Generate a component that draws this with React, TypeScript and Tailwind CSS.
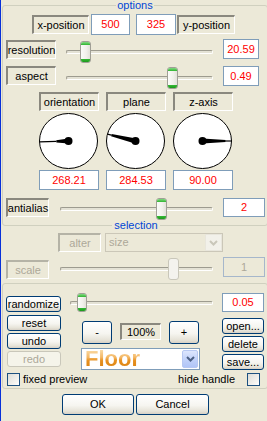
import React from "react";

const SUNKEN =
  "flex items-center justify-center border-t-2 border-l-2 border-t-[#8a887e] border-l-[#8a887e] border-b border-r border-b-white border-r-white";
const SUNKEN_DIS =
  "flex items-center justify-center border-t-2 border-l-2 border-t-[#b5b3a6] border-l-[#b5b3a6] border-b border-r border-b-white border-r-white text-[#aca899]";
const VALUE =
  "flex items-center justify-center bg-white border border-[#7f9db9] text-[#ff0000]";
const BTN =
  "flex items-center justify-center rounded-[3px] border border-[#003c74] bg-[linear-gradient(180deg,#ffffff_0%,#f6f5f0_55%,#e6e3d8_85%,#d6d0c5_100%)] text-black";
const BTN_DIS =
  "flex items-center justify-center rounded-[3px] border border-[#c9c7ba] bg-[#f5f4ea] text-[#aca899]";

function Slider({
  width,
  thumbX,
  thumbTop,
  thumbW = 11,
  thumbH = 22,
  disabled = false,
  className = "",
}: {
  width: number;
  thumbX: number;
  thumbTop: number;
  thumbW?: number;
  thumbH?: number;
  disabled?: boolean;
  className?: string;
}) {
  const trackTop = thumbTop + Math.round(thumbH / 2) - 2;
  return (
    <div className={"relative " + className} style={{ width, height: thumbTop + thumbH + 1 }}>
      <div
        className="h-[4px] rounded-[2px] border border-t-[#9d9b8f] border-l-[#9d9b8f] border-b-white border-r-white bg-[#e4e2d5]"
        style={{ marginTop: trackTop }}
      />
      <div
        className={
          "absolute flex flex-col justify-between overflow-hidden rounded-[3px] border " +
          (disabled
            ? "border-[#c9c7ba] bg-[#f4f3ee]"
            : "border-[#a09f96] bg-[linear-gradient(90deg,#fbfbf9_0%,#f1f0eb_60%,#e2e1d9_100%)]")
        }
        style={{ left: thumbX, top: thumbTop, width: thumbW, height: thumbH }}
      >
        {!disabled && (
          <>
            <div className="h-[3px] bg-[linear-gradient(180deg,#82d882,#2fb52f)]" />
            <div className="h-[3px] bg-[linear-gradient(180deg,#36b836,#1c9a1c)]" />
          </>
        )}
      </div>
    </div>
  );
}

function Dial({ angle, thick }: { angle: number; thick: number }) {
  const cx = 29.5;
  const cy = 28;
  const rx = 29;
  const ry = 27.5;
  const a = (angle * Math.PI) / 180;
  const dx = Math.sin(a);
  const dy = -Math.cos(a);
  const px = Math.cos(a);
  const py = Math.sin(a);
  const tx = cx + dx * rx * thick;
  const ty = cy + dy * ry * thick;
  const ex = cx + dx * rx;
  const ey = cy + dy * ry;
  const w0 = 2.6;
  const w1 = 1.1;
  const pts = [
    [cx + px * w0, cy + py * w0],
    [tx + px * w1, ty + py * w1],
    [tx - px * w1, ty - py * w1],
    [cx - px * w0, cy - py * w0],
  ]
    .map((p) => p.map((v) => v.toFixed(2)).join(","))
    .join(" ");
  return (
    <svg width="60" height="56" viewBox="0 0 60 56">
      <ellipse cx={cx} cy={cy} rx={rx} ry={ry} fill="white" stroke="black" strokeWidth="1" />
      <line x1={tx} y1={ty} x2={ex} y2={ey} stroke="black" strokeWidth="1.2" />
      <polygon points={pts} fill="black" />
      <circle cx={cx} cy={cy} r="4" fill="black" />
    </svg>
  );
}

function Chevron({ color }: { color: string }) {
  return (
    <svg width="9" height="6" viewBox="0 0 9 6">
      <polyline points="1,1 4.5,4.5 8,1" fill="none" stroke={color} strokeWidth="2" />
    </svg>
  );
}

function Check({ className = "" }: { className?: string }) {
  return (
    <div
      className={
        "w-[13px] h-[13px] border border-[#1c5180] bg-[linear-gradient(135deg,#dcdcd7_0%,#f4f4f0_70%,#ffffff_100%)] " +
        className
      }
    />
  );
}

export default function App() {
  return (
    <div className="w-[267px] h-[421px] overflow-hidden bg-[#ece9d8] border-l border-[#0831d9] font-['Liberation_Sans',Arial,sans-serif] text-[11px] leading-none text-black">
      {/* options group */}
      <fieldset className="ml-[1px] w-[266px] rounded-[3px] border border-[#d0d0bf] pb-[4px]">
        <legend className="mx-auto px-[1px] leading-[11px] text-[#0046d5]">options</legend>

        <div className="mt-[3px] flex items-start">
          <div className={SUNKEN + " ml-[29px] mt-[1px] h-[19px] w-[57px]"}>x-position</div>
          <div className={VALUE + " ml-[2px] h-[21px] w-[39px]"}>500</div>
          <div className={VALUE + " ml-[6px] h-[21px] w-[40px]"}>325</div>
          <div className={SUNKEN + " ml-[1px] mt-[1px] h-[19px] w-[58px]"}>y-position</div>
        </div>

        <div className="mt-[4px] flex items-start">
          <div className={SUNKEN + " ml-[3px] mt-[1px] h-[19px] w-[50px]"}>resolution</div>
          <Slider className="ml-[10px]" width={147} thumbX={14} thumbTop={2} />
          <div className={VALUE + " ml-[10px] h-[20px] w-[36px]"}>20.59</div>
        </div>

        <div className="mt-[2px] flex items-start">
          <div className={SUNKEN + " ml-[3px] h-[19px] w-[50px]"}>aspect</div>
          <Slider className="ml-[10px]" width={147} thumbX={101} thumbTop={1} />
          <div className={VALUE + " ml-[10px] h-[20px] w-[36px]"}>0.49</div>
        </div>

        <div className="mt-[2px] ml-[36px] flex gap-[7px]">
          {[
            { l: "orientation", v: "268.21", a: 268.21, t: 0.42 },
            { l: "plane", v: "284.53", a: 284.53, t: 0.86 },
            { l: "z-axis", v: "90.00", a: 90, t: 0.8 },
          ].map((d) => (
            <div key={d.l} className="flex w-[60px] flex-col">
              <div className={SUNKEN + " h-[19px] w-[60px]"}>{d.l}</div>
              <div className="mt-[2px] h-[56px]">
                <Dial angle={d.a} thick={d.t} />
              </div>
              <div className={VALUE + " mt-[1px] h-[20px] w-[60px]"}>{d.v}</div>
            </div>
          ))}
        </div>

        <div className="mt-[8px] flex items-start">
          <div className={SUNKEN + " ml-[3px] h-[19px] w-[43px]"}>antialias</div>
          <Slider className="ml-[11px]" width={153} thumbX={96} thumbTop={0} />
          <div className={VALUE + " ml-[10px] h-[19px] w-[42px]"}>2</div>
        </div>
      </fieldset>

      {/* selection */}
      <div className="-mt-[6px] flex justify-center pl-[4px]">
        <span className="bg-[#ece9d8] px-[2px] leading-[11px] text-[#0046d5]">selection</span>
      </div>

      <div className="mt-[2px] flex items-start">
        <div className={SUNKEN_DIS + " ml-[57px] h-[19px] w-[43px]"}>alter</div>
        <div className="ml-[4px] flex h-[19px] w-[118px] items-stretch border border-[#cbc7b8] bg-[#ece9d8]">
          <div className="flex flex-1 items-center pl-[3px] text-[#aca899]">size</div>
          <div className="flex w-[17px] items-center justify-center border border-[#e8e6dc] bg-[#f2f1ea]">
            <Chevron color="#c9c7ba" />
          </div>
        </div>
      </div>

      <div className="mt-[5px] flex items-start">
        <div className={SUNKEN_DIS + " ml-[5px] mt-[3px] h-[19px] w-[43px]"}>scale</div>
        <Slider className="ml-[11px]" width={153} thumbX={108} thumbTop={1} disabled />
        <div className="ml-[10px] flex h-[20px] w-[42px] items-center justify-center border border-[#a6b7cb] text-[#aca899]">
          1
        </div>
      </div>

      {/* bottom group */}
      <fieldset className="mt-[2px] ml-[1px] w-[266px] rounded-[3px] border border-[#d0d0bf] pb-[2px]">
        <div className="mt-[9px] flex items-start">
          <div className={BTN + " ml-[3px] mt-[3px] h-[16px] w-[55px]"}>randomize</div>
          <Slider className="ml-[9px]" width={143} thumbX={7} thumbTop={0} thumbW={10} thumbH={19} />
          <div className={VALUE + " ml-[9px] h-[19px] w-[42px]"}>0.05</div>
        </div>

        <div className="mt-[2px] flex items-start">
          <div className="ml-[4px] flex w-[54px] flex-col gap-[2px]">
            <div className={BTN + " h-[16px]"}>reset</div>
            <div className={BTN + " h-[16px]"}>undo</div>
            <div className={BTN_DIS + " h-[16px]"}>redo</div>
          </div>

          <div className="ml-[20px] flex w-[119px] flex-col">
            <div className="mt-[6px] flex items-start">
              <div className={BTN + " ml-[1px] h-[23px] w-[30px]"}>-</div>
              <div className={SUNKEN + " ml-[8px] mt-[2px] h-[17px] w-[41px]"}>100%</div>
              <div className={BTN + " ml-[8px] h-[23px] w-[30px]"}>+</div>
            </div>
            <div className="mt-[4px] flex h-[22px] w-[119px] items-stretch border border-[#7f9db9] bg-white">
              <div className="flex flex-1 items-center pl-[3px]">
                <span className="bg-[linear-gradient(180deg,#fbe3b6_0%,#f4b866_42%,#e6901f_58%,#d9800f_100%)] bg-clip-text text-[22px] font-bold leading-[22px] text-transparent">
                  Floor
                </span>
              </div>
              <div className="m-[1px] flex w-[16px] items-center justify-center rounded-[2px] border border-[#b7c8f2] bg-[linear-gradient(180deg,#dde6fd_0%,#c3d3fa_50%,#b1c5f7_100%)]">
                <Chevron color="#4d6185" />
              </div>
            </div>
          </div>

          <div className="ml-[22px] flex w-[42px] flex-col gap-[2px] pt-[3px]">
            <div className={BTN + " h-[16px]"}>open...</div>
            <div className={BTN + " h-[16px]"}>delete</div>
            <div className={BTN + " h-[16px]"}>save...</div>
          </div>
        </div>

        <div className="mt-[3px] flex items-center">
          <Check className="ml-[4px]" />
          <span className="ml-[3px]">fixed preview</span>
          <span className="ml-auto">hide handle</span>
          <Check className="ml-[12px] mr-[7px]" />
        </div>
      </fieldset>

      <div className="mt-[5px] flex">
        <div className={BTN + " ml-[61px] h-[21px] w-[72px]"}>OK</div>
        <div className={BTN + " ml-[2px] h-[21px] w-[73px]"}>Cancel</div>
      </div>
    </div>
  );
}
